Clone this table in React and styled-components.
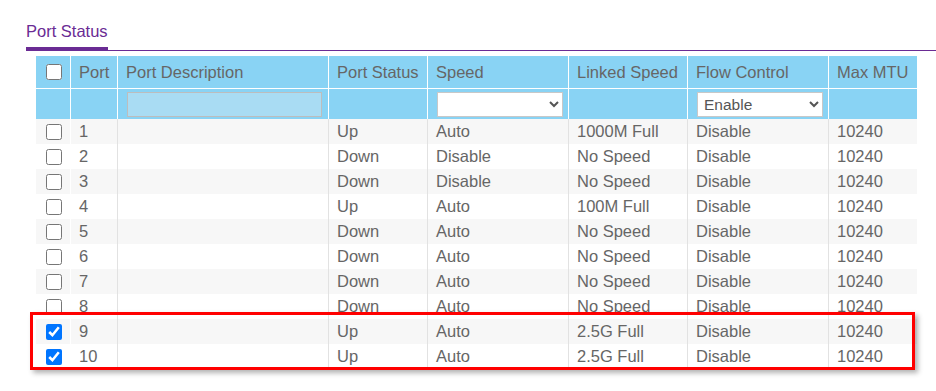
import React from "react";
import styled, { createGlobalStyle } from "styled-components";

const GlobalStyle = createGlobalStyle`
  html, body {
    margin: 0;
    padding: 0;
    background: #fff;
    font-family: "Liberation Sans", Arial, sans-serif;
  }
`;

const COLS = "35px 47px 211px 99px 141px 119px 141px 88px";
const HEAD_H = 33;
const FILTER_H = 30;
const ROW_H = 25;

const Page = styled.div`
  padding: 22px 0 20px 26px;
`;

const TabBar = styled.div`
  display: flex;
  border-bottom: 1px solid #6a2b94;
`;

const Tab = styled.div`
  font-size: 16.5px;
  line-height: 18px;
  color: #6a2b94;
  padding-bottom: 7px;
  border-bottom: 4px solid #6a2b94;
  margin-bottom: -1px;
`;

const TableWrap = styled.div`
  position: relative;
  margin: 5px 0 0 10px;
  width: 881px;
`;

const Row = styled.div`
  display: grid;
  grid-template-columns: ${COLS};
  height: ${(p) => p.$h}px;
  background: ${(p) => p.$bg};
  border-bottom: ${(p) => (p.$line ? "1px solid #fff" : "none")};
  box-sizing: border-box;
`;

const Cell = styled.div`
  display: flex;
  align-items: center;
  justify-content: ${(p) => (p.$center ? "center" : "flex-start")};
  padding-left: ${(p) => (p.$center ? 0 : 8)}px;
  border-right: 1px solid ${(p) => p.$border};
  font-size: 16.5px;
  color: #666;
  white-space: nowrap;
  overflow: hidden;
  box-sizing: border-box;
  &:last-child {
    border-right: none;
  }
`;

const Check = styled.input.attrs({ type: "checkbox" })`
  width: 16px;
  height: 16px;
  margin: 0 0 0 1px;
`;

const DescInput = styled.input`
  width: 195px;
  height: 25px;
  margin-left: 1px;
  box-sizing: border-box;
  background: #a9dcf3;
  border: 1px solid #bdbdbd;
  outline: none;
`;

const Select = styled.select`
  width: 126px;
  height: 25px;
  margin-left: 1px;
  box-sizing: border-box;
  background: #fff;
  border: 1px solid #c8c8c8;
  border-radius: 0;
  font-family: "Liberation Sans", Arial, sans-serif;
  font-size: 15.5px;
  color: #555;
  padding: 0 2px;
`;

const Highlight = styled.div`
  position: absolute;
  left: -6px;
  width: 885px;
  height: 58px;
  box-sizing: border-box;
  border: 3px solid #ff0000;
  box-shadow: 3px 3px 5px rgba(0, 0, 0, 0.3);
  pointer-events: none;
`;

const headers = [
  "",
  "Port",
  "Port Description",
  "Port Status",
  "Speed",
  "Linked Speed",
  "Flow Control",
  "Max MTU",
];

const ports = [
  [1, "Up", "Auto", "1000M Full"],
  [2, "Down", "Disable", "No Speed"],
  [3, "Down", "Disable", "No Speed"],
  [4, "Up", "Auto", "100M Full"],
  [5, "Down", "Auto", "No Speed"],
  [6, "Down", "Auto", "No Speed"],
  [7, "Down", "Auto", "No Speed"],
  [8, "Down", "Auto", "No Speed"],
  [9, "Up", "Auto", "2.5G Full"],
  [10, "Up", "Auto", "2.5G Full"],
];

const selected = [9, 10];

export default function App() {
  const firstSel = ports.findIndex((p) => selected.includes(p[0]));
  const hlTop = HEAD_H + FILTER_H + firstSel * ROW_H - 7;

  return (
    <Page>
      <GlobalStyle />
      <TabBar>
        <Tab>Port Status</Tab>
      </TabBar>
      <TableWrap>
        <Row $h={HEAD_H} $bg="#89d3f4" $line>
          {headers.map((h, i) => (
            <Cell key={i} $border="#fff" $center={i === 0}>
              {i === 0 ? <Check readOnly /> : h}
            </Cell>
          ))}
        </Row>
        <Row $h={FILTER_H} $bg="#89d3f4">
          <Cell $border="#fff" />
          <Cell $border="#fff" />
          <Cell $border="#fff">
            <DescInput />
          </Cell>
          <Cell $border="#fff" />
          <Cell $border="#fff">
            <Select defaultValue="">
              <option value=""></option>
              <option>Auto</option>
              <option>Disable</option>
            </Select>
          </Cell>
          <Cell $border="#fff" />
          <Cell $border="#fff">
            <Select defaultValue="Enable">
              <option>Enable</option>
              <option>Disable</option>
            </Select>
          </Cell>
          <Cell $border="#fff" />
        </Row>
        {ports.map(([port, status, speed, linked], i) => (
          <Row key={port} $h={ROW_H} $bg={i % 2 === 0 ? "#f7f7f7" : "#fff"}>
            <Cell $border="#fff" $center>
              <Check readOnly checked={selected.includes(port)} />
            </Cell>
            <Cell $border="#e2e2e2">{port}</Cell>
            <Cell $border="#e2e2e2" />
            <Cell $border="#e2e2e2">{status}</Cell>
            <Cell $border="#e2e2e2">{speed}</Cell>
            <Cell $border="#e2e2e2">{linked}</Cell>
            <Cell $border="#e2e2e2">Disable</Cell>
            <Cell $border="#e2e2e2">10240</Cell>
          </Row>
        ))}
        <Highlight style={{ top: hlTop }} />
      </TableWrap>
    </Page>
  );
}
